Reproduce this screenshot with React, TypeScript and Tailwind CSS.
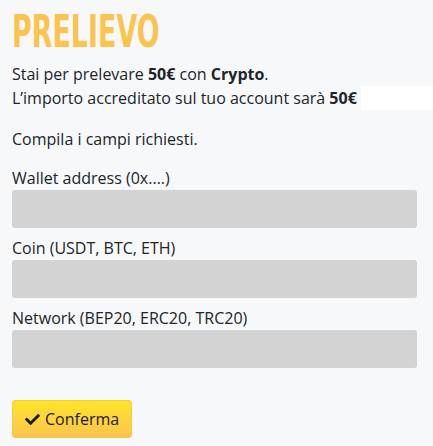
import { FaCheck } from "react-icons/fa";

const fields = [
  "Wallet address (0x....)",
  "Coin (USDT, BTC, ETH)",
  "Network (BEP20, ERC20, TRC20)",
];

const App = () => {
  return (
    <section
      className="min-h-[446px] w-full bg-[#f7f8fa] pl-3 pr-4 pt-[6px] text-[16px] text-[#212529]"
      style={{ fontFamily: '"Open Sans", "Liberation Sans", sans-serif' }}
    >
      {/* TITLE */}
      <h1
        className="origin-left scale-x-[0.68] text-[44px] font-bold leading-[52px] text-[#fcc44e]"
        style={{ fontFamily: '"Liberation Sans Narrow", "DejaVu Sans Condensed", "Liberation Sans", sans-serif' }}
      >
        PRELIEVO
      </h1>

      {/* SUMMARY */}
      <div className="mt-[5px] leading-[23px]">
        <p>
          Stai per prelevare <b>50€</b> con <b>Crypto</b>.
        </p>
        <div className="-mr-4 flex items-center">
          <p>
            L’importo accreditato sul tuo account sarà <b>50€</b>
          </p>
          <span className="ml-[4px] h-[24px] flex-1 bg-white" />
        </div>
      </div>

      <p className="mt-[17px] leading-[24px]">Compila i campi richiesti.</p>

      {/* FORM */}
      <form className="mt-[15px] flex flex-col gap-[8px]">
        {fields.map((label) => (
          <label key={label} className="flex flex-col">
            <span className="leading-[24px]">{label}</span>
            <input
              type="text"
              className="h-[38px] w-full rounded-[3px] bg-[#d3d3d3] px-3 outline-none"
            />
          </label>
        ))}
      </form>

      <button
        type="button"
        className="mt-[32px] flex h-[38px] w-[120px] items-center gap-[5px] rounded-[3px] border border-[#f3cd3a] bg-gradient-to-b from-[#fde428] to-[#fbc44c] pl-[12px] text-[16px] text-[#1c1c1c]"
      >
        <FaCheck size={15} />
        Conferma
      </button>
    </section>
  );
};

export default App;
